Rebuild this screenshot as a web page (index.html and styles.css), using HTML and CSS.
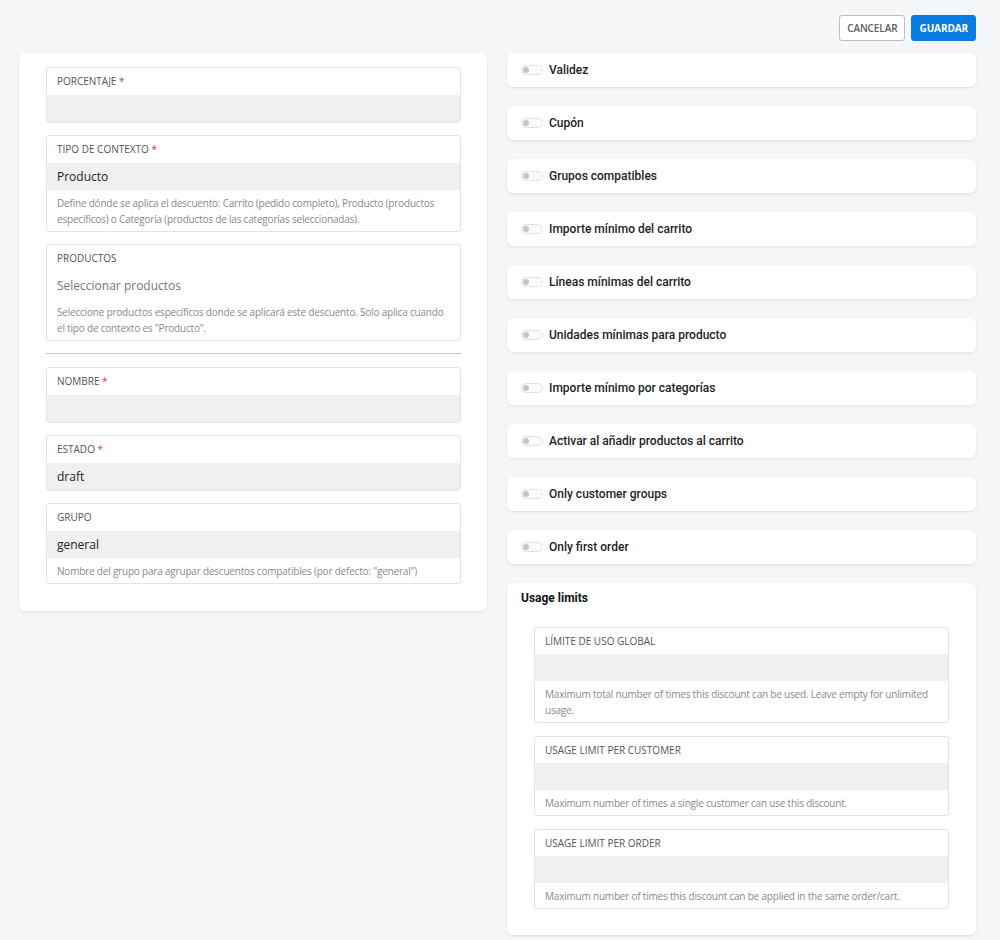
FILE: index.html
```html
<!DOCTYPE html>
<html lang="es">
  <head>
      <meta charset="UTF-8">
      <meta name="viewport" content="width=device-width, initial-scale=1.0">
      <title>Descuento</title>
      <link rel="stylesheet" href="styles.css">
  </head>
  <body>
      <header class="topbar">
          <button class="btn btn-cancel" type="button">Cancelar</button>
          <button class="btn btn-save" type="button">Guardar</button>
      </header>
      <main class="layout">
          <section class="card card-form">
              <div class="field">
                  <div class="field-label">Porcentaje <span class="req">*</span></div>
                  <div class="field-input"></div>
              </div>
              <div class="field">
                  <div class="field-label">Tipo de contexto <span class="req">*</span></div>
                  <div class="field-input">Producto</div>
                  <div class="field-help">Define dónde se aplica el descuento: Carrito (pedido completo), Producto (productos específicos) o Categoría (productos de las categorías seleccionadas).</div>
              </div>
              <div class="field">
                  <div class="field-label">Productos</div>
                  <div class="field-select">Seleccionar productos</div>
                  <div class="field-help">Seleccione productos específicos donde se aplicará este descuento. Solo aplica cuando el tipo de contexto es "Producto".</div>
              </div>
              <hr class="divider">
              <div class="field">
                  <div class="field-label">Nombre <span class="req">*</span></div>
                  <div class="field-input"></div>
              </div>
              <div class="field">
                  <div class="field-label">Estado <span class="req">*</span></div>
                  <div class="field-input">draft</div>
              </div>
              <div class="field">
                  <div class="field-label">Grupo</div>
                  <div class="field-input">general</div>
                  <div class="field-help">Nombre del grupo para agrupar descuentos compatibles (por defecto: "general")</div>
              </div>
          </section>

          <section class="side">
              <div class="card toggle-card"><span class="toggle"></span>Validez</div>
              <div class="card toggle-card"><span class="toggle"></span>Cupón</div>
              <div class="card toggle-card"><span class="toggle"></span>Grupos compatibles</div>
              <div class="card toggle-card"><span class="toggle"></span>Importe mínimo del carrito</div>
              <div class="card toggle-card"><span class="toggle"></span>Líneas mínimas del carrito</div>
              <div class="card toggle-card"><span class="toggle"></span>Unidades mínimas para producto</div>
              <div class="card toggle-card"><span class="toggle"></span>Importe mínimo por categorías</div>
              <div class="card toggle-card"><span class="toggle"></span>Activar al añadir productos al carrito</div>
              <div class="card toggle-card"><span class="toggle"></span>Only customer groups</div>
              <div class="card toggle-card"><span class="toggle"></span>Only first order</div>

              <div class="card card-limits">
                  <h2 class="card-title">Usage limits</h2>
                  <div class="limits">
                      <div class="field">
                          <div class="field-label">Límite de uso global</div>
                          <div class="field-input"></div>
                          <div class="field-help">Maximum total number of times this discount can be used. Leave empty for unlimited usage.</div>
                      </div>
                      <div class="field">
                          <div class="field-label">Usage limit per customer</div>
                          <div class="field-input"></div>
                          <div class="field-help">Maximum number of times a single customer can use this discount.</div>
                      </div>
                      <div class="field">
                          <div class="field-label">Usage limit per order</div>
                          <div class="field-input"></div>
                          <div class="field-help">Maximum number of times this discount can be applied in the same order/cart.</div>
                      </div>
                  </div>
              </div>
          </section>
      </main>
  </body>
</html>
```

FILE: styles.css
```css
*   {
    box-sizing: border-box;
}
body  {
    margin: 0;
    background-color: #f5f6f8;
    color: #222;
    font-family: "Open Sans", "Liberation Sans", sans-serif;
    font-size: 12px;
}
.topbar   {
    display: flex;
    justify-content: flex-end;
    gap: 6px;
    padding: 15px 24px 12px;
}
.btn  {
    height: 26px;
    padding: 0 7px;
    border-radius: 3px;
    font-family: inherit;
    font-size: 10px;
    font-weight: 600;
    letter-spacing: -0.1px;
    text-transform: uppercase;
    cursor: pointer;
}
.btn-cancel   {
    background: #fff;
    color: #5a6068;
    border: 1px solid #b9bec5;
}
.btn-save {
    background: #0a7be0;
    color: #fff;
    border: 1px solid #0a7be0;
    font-weight: 700;
}
.layout   {
    display: grid;
    grid-template-columns: 468px 469px;
    gap: 20px;
    padding: 0 24px 6px 19px;
    align-items: start;
}
.card {
    background: #fff;
    border-radius: 6px;
    box-shadow: 0 1px 3px rgba(0, 0, 0, 0.09);
}
.card-form    {
    display: flex;
    flex-direction: column;
    gap: 12px;
    padding: 14px 26px 27px 27px;
}
.field    {
    border: 1px solid #e3e3e3;
    border-radius: 3px;
    background: #fff;
    overflow: hidden;
}
.field-label  {
    height: 27px;
    line-height: 26px;
    padding: 0 10px;
    font-size: 10px;
    color: #555;
    text-transform: uppercase;
}
.req  {
    color: #e53935;
}
.field-input  {
    height: 27px;
    line-height: 27px;
    padding: 0 10px;
    background: #f0f0f0;
    font-size: 12px;
    color: #222;
}
.field-select {
    height: 27px;
    line-height: 27px;
    padding: 0 10px;
    font-size: 12px;
    color: #777;
}
.field-help   {
    padding: 5px 10px 4px;
    font-size: 10px;
    line-height: 16px;
    letter-spacing: -0.2px;
    color: #8a8a8a;
}
.divider  {
    margin: 0 0 1px;
    border: none;
    border-top: 1px solid #c6c6c6;
}
.side {
    display: flex;
    flex-direction: column;
    gap: 19px;
}
.toggle-card  {
    display: flex;
    align-items: center;
    gap: 6px;
    height: 34px;
    padding: 0 14px;
    font-family: Roboto, "Open Sans", sans-serif;
    font-size: 12px;
    font-weight: 500;
    color: #1e1e1e;
}
.toggle   {
    position: relative;
    width: 22px;
    height: 10px;
    border: 1px solid #e2e2e2;
    border-radius: 5px;
    background: #fafafa;
}
.toggle::after    {
    content: "";
    position: absolute;
    left: 1px;
    top: 1px;
    width: 6px;
    height: 6px;
    border-radius: 50%;
    background: #c4c4c4;
}
.card-limits  {
    padding: 7px 27px 26px;
}
.card-title   {
    margin: 0 -13px 20px;
    font-family: Roboto, "Open Sans", sans-serif;
    font-size: 12px;
    font-weight: 700;
    line-height: 17px;
    color: #111;
}
.limits   {
    display: flex;
    flex-direction: column;
    gap: 13px;
}
.limits .field-label  {
    height: 26px;
}
```
